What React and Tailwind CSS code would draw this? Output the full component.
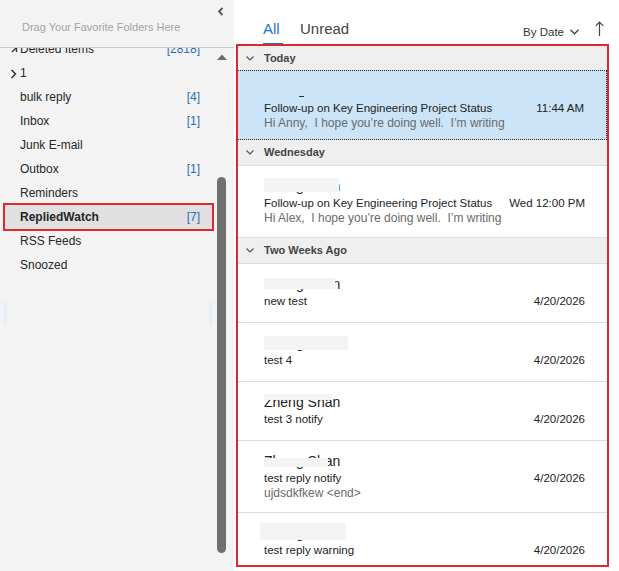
const FOLDERS = [
  { name: "Deleted Items", count: "[2818]", chevron: "open" },
  { name: "1", chevron: "closed" },
  { name: "bulk reply", count: "[4]" },
  { name: "Inbox", count: "[1]" },
  { name: "Junk E-mail" },
  { name: "Outbox", count: "[1]" },
  { name: "Reminders" },
  { name: "RepliedWatch", count: "[7]", selected: true },
  { name: "RSS Feeds" },
  { name: "Snoozed" },
];

const GROUPS = [
  {
    title: "Today",
    first: true,
    items: [
      {
        selected: true,
        subject: "Follow-up on Key Engineering Project Status",
        time: "11:44 AM",
        preview: "Hi Anny,  I hope you\u2019re doing well.  I\u2019m writing",
      },
    ],
  },
  {
    title: "Wednesday",
    items: [
      {
        name: "Zheng Shan",
        mask: "left-0 top-[1px] h-[14px] w-[75px]",
        subject: "Follow-up on Key Engineering Project Status",
        time: "Wed 12:00 PM",
        preview: "Hi Alex,  I hope you\u2019re doing well.  I\u2019m writing",
      },
    ],
  },
  {
    title: "Two Weeks Ago",
    items: [
      { name: "Zheng Shan", mask: "left-0 top-[3px] h-[11px] w-[71px]", subject: "new test", time: "4/20/2026" },
      { name: "Zheng Shan", mask: "left-0 top-[2px] h-[14px] w-[84px]", subject: "test 4", time: "4/20/2026" },
      { name: "Zheng Shan", mask: "left-0 top-[1px] h-[6px] w-[68px]", subject: "test 3 notify", time: "4/20/2026" },
      {
        name: "Zheng Shan",
        mask: "left-0 top-[6px] h-[9px] w-[64px]",
        subject: "test reply notify",
        time: "4/20/2026",
        preview: "ujdsdkfkew <end>",
      },
      { name: "Zheng Shan", mask: "-left-[4px] -top-[1px] h-[17px] w-[86px]", subject: "test reply warning", time: "4/20/2026", last: true },
    ],
  },
];

export default function App() {
  return (
    <div className="flex h-[571px] w-[619px] overflow-hidden bg-white font-['Liberation_Sans',Arial,sans-serif] text-[#262626]">
      <FolderPane />
      <MessagePane />
    </div>
  );
}

function FolderPane() {
  return (
    <aside className="relative flex w-[234px] shrink-0 flex-col bg-[#f3f3f3]">
      <div className="relative h-[48px] shrink-0 border-b border-[#cacaca]">
        <svg className="absolute left-[217px] top-[7px]" width="8" height="9" viewBox="0 0 8 9">
          <path d="M5.5 1 L2 4.5 L5.5 8" fill="none" stroke="#555" strokeWidth="1.8" />
        </svg>
        <div className="pl-[22px] pt-[20px] text-[11px] leading-[14px] text-[#a3a3a3]">
          Drag Your Favorite Folders Here
        </div>
      </div>

      <div className="flex min-h-0 flex-1">
        <div className="min-w-0 flex-1 overflow-hidden">
          <div className="-mt-[11px] pl-[3px]">
            {FOLDERS.map((f) => (
              <FolderRow key={f.name} folder={f} />
            ))}
          </div>
        </div>

        <div className="flex w-[20px] shrink-0 flex-col items-start pl-[3px]">
          <svg className="mt-[6px]" width="10" height="6" viewBox="0 0 10 6">
            <path d="M0 6 L5 0.5 L10 6 Z" fill="#6e6e6e" />
          </svg>
          <div className="mt-[117px] h-[376px] w-[9px] rounded-full bg-[#6f6f6f]" />
        </div>
      </div>

      <div className="absolute left-[4px] top-[302px] h-[24px] w-[3px] bg-[#e3f0fb]" />
      <div className="absolute left-[209px] top-[302px] h-[24px] w-[3px] bg-[#e3f0fb]" />
    </aside>
  );
}

function FolderRow({ folder }) {
  const boxed = folder.selected
    ? "border-2 border-[#e0272d] bg-[#e0e0e0] font-bold -my-[2px] h-[28px]"
    : "border-2 border-transparent h-[24px]";
  return (
    <div className={`relative flex items-center pr-[12px] text-[12px] ${boxed}`}>
      {folder.chevron === "open" && (
        <svg className="absolute left-[6px] top-[6px]" width="7" height="8" viewBox="0 0 7 8">
          <path d="M1 7 L5.5 2.5 L5.5 7" fill="none" stroke="#333" strokeWidth="1.4" />
        </svg>
      )}
      {folder.chevron === "closed" && (
        <svg className="absolute left-[5px] top-[6px]" width="7" height="10" viewBox="0 0 7 10">
          <path d="M1.5 1 L5.5 5 L1.5 9" fill="none" stroke="#333" strokeWidth="1.5" />
        </svg>
      )}
      <span className="flex-1 pl-[15px]">{folder.name}</span>
      {folder.count && <span className="font-normal text-[#2b6db3]">{folder.count}</span>}
    </div>
  );
}

function MessagePane() {
  return (
    <section className="flex min-w-0 flex-1 flex-col">
      <header className="flex h-[44px] shrink-0 items-start pl-[29px] pr-[15px]">
        <div className="flex flex-col pt-[19px]">
          <span className="text-[15px] leading-[20px] text-[#2473c9]">All</span>
          <div className="mt-[4px] h-[2px] w-[20px] bg-[#1e6fc5]" />
        </div>
        <span className="ml-[17px] pt-[19px] text-[15px] leading-[20px] text-[#444]">Unread</span>
        <div className="ml-auto flex items-center gap-[6px] pt-[24px] text-[11.5px] leading-[16px] text-[#333]">
          <span>By Date</span>
          <svg width="9" height="6" viewBox="0 0 9 6">
            <path d="M0.5 0.8 L4.5 4.8 L8.5 0.8" fill="none" stroke="#444" strokeWidth="1.3" />
          </svg>
          <svg className="ml-[10px] -mt-[7px]" width="9" height="16" viewBox="0 0 9 16">
            <path d="M4.5 1 L4.5 15 M0.8 4.8 L4.5 1 L8.2 4.8" fill="none" stroke="#444" strokeWidth="1.2" />
          </svg>
        </div>
      </header>

      <div className="ml-[2px] mr-[10px] flex h-[523px] flex-col overflow-hidden border-2 border-[#e0272d]">
        {GROUPS.map((g) => (
          <div key={g.title}>
            <GroupHeader title={g.title} first={g.first} />
            {g.items.map((m, i) => (
              <MessageRow key={i} msg={m} />
            ))}
          </div>
        ))}
      </div>
    </section>
  );
}

function GroupHeader({ title, first }) {
  return (
    <div
      className={`flex items-center bg-[#efefef] ${first ? "h-[24px]" : "h-[26px] border-b border-[#dcdcdc]"}`}
    >
      <svg className="ml-[8px] mr-[10px]" width="8" height="5" viewBox="0 0 8 5">
        <path d="M0.5 0.5 L4 4 L7.5 0.5" fill="none" stroke="#555" strokeWidth="1.2" />
      </svg>
      <span className="text-[11px] font-bold text-[#444]">{title}</span>
    </div>
  );
}

function MessageRow({ msg }) {
  const tall = !!msg.preview;
  const frame = msg.selected
    ? "h-[70px] border-y border-r border-dotted border-[#222] bg-[#cce4f7]"
    : `${tall ? "h-[72px]" : "h-[59px]"} ${msg.last ? "" : "border-b border-[#dedede]"}`;
  return (
    <div className={`pl-[26px] pr-[22px] pt-[11px] ${frame}`}>
      <div className="relative h-[18px] text-[14px] leading-[18px] text-[#222]">
        {msg.name ? (
          <>
            <span>{msg.name}</span>
            <div className={`absolute bg-[#f3f3f3] ${msg.mask}`} />
          </>
        ) : (
          <div className="absolute left-[35px] top-[14px] h-[1px] w-[5px] bg-[#333]" />
        )}
      </div>
      <div className="flex h-[16px] items-center justify-between text-[11.5px] leading-[16px] text-[#222]">
        <span>{msg.subject}</span>
        <span>{msg.time}</span>
      </div>
      {msg.preview && (
        <div className="h-[15px] whitespace-pre text-[12px] leading-[15px] text-[#6b6b6b]">{msg.preview}</div>
      )}
    </div>
  );
}
